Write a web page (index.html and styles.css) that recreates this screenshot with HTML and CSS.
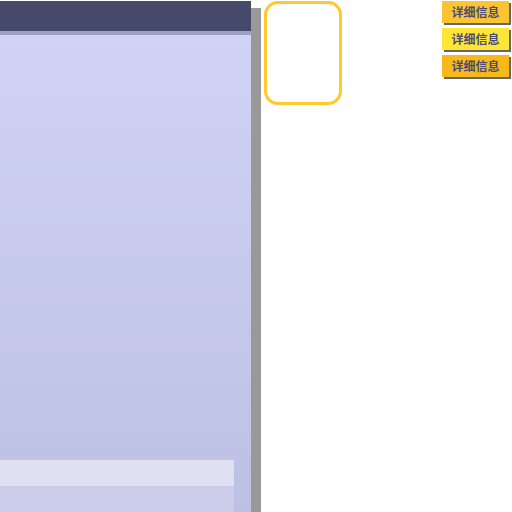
FILE: index.html
```html
<!DOCTYPE html>
<html lang="zh">
<head>
<meta charset="utf-8">
<link rel="stylesheet" href="styles.css">
</head>
<body>
<div class="page">
  <div class="panel">
    <div class="panel-head"></div>
    <div class="panel-strip"></div>
    <div class="panel-body">
      <div class="panel-fill"></div>
      <div class="row row-light"></div>
      <div class="row row-mid"></div>
    </div>
  </div>
  <div class="card"></div>
  <div class="spacer"></div>
  <div class="buttons">
    <button class="btn btn-a">详细信息</button>
    <button class="btn btn-b">详细信息</button>
    <button class="btn btn-c">详细信息</button>
  </div>
</div>
</body>
</html>
```
FILE: styles.css
```css
html, body {
  margin: 0;
  padding: 0;
  background: #ffffff;
  overflow: hidden;
}
.page {
  display: flex;
  align-items: flex-start;
  padding-top: 1px;
  height: 511px;
  font-family: "Noto Sans CJK SC", "Noto Sans", sans-serif;
}
.panel {
  width: 251px;
  height: 511px;
  display: flex;
  flex-direction: column;
  box-shadow: 10px 7px 0 #999999;
  flex-shrink: 0;
}
.panel-head {
  height: 30px;
  background: #454a6b;
}
.panel-strip {
  height: 4px;
  background: #9ea0c4;
}
.panel-body {
  flex: 1;
  display: flex;
  flex-direction: column;
  background: linear-gradient(#d0d3f5, #bcc0e2);
}
.panel-fill {
  flex: 1;
}
.row {
  width: 234px;
  height: 26px;
}
.row-light { background: #dfe0f2; }
.row-mid { background: #cbcce9; }
.card {
  margin-left: 13px;
  width: 72px;
  height: 98px;
  border: 3px solid #ffc82c;
  border-radius: 14px;
  flex-shrink: 0;
}
.spacer { flex: 1; }
.buttons {
  display: flex;
  flex-direction: column;
  gap: 5px;
  margin-right: 3px;
}
.btn {
  width: 67px;
  height: 22px;
  border: none;
  padding: 0 0 2px 0;
  margin: 0;
  font-family: "Noto Sans CJK SC", sans-serif;
  font-size: 12px;
  font-weight: bold;
  color: #4b4a78;
  box-shadow: 2px 2px 0 #666666;
  display: flex;
  align-items: center;
  justify-content: center;
}
.btn-a { background: #fcc433; }
.btn-b { background: #ffe536; }
.btn-c { background: #f7b81a; }
```
